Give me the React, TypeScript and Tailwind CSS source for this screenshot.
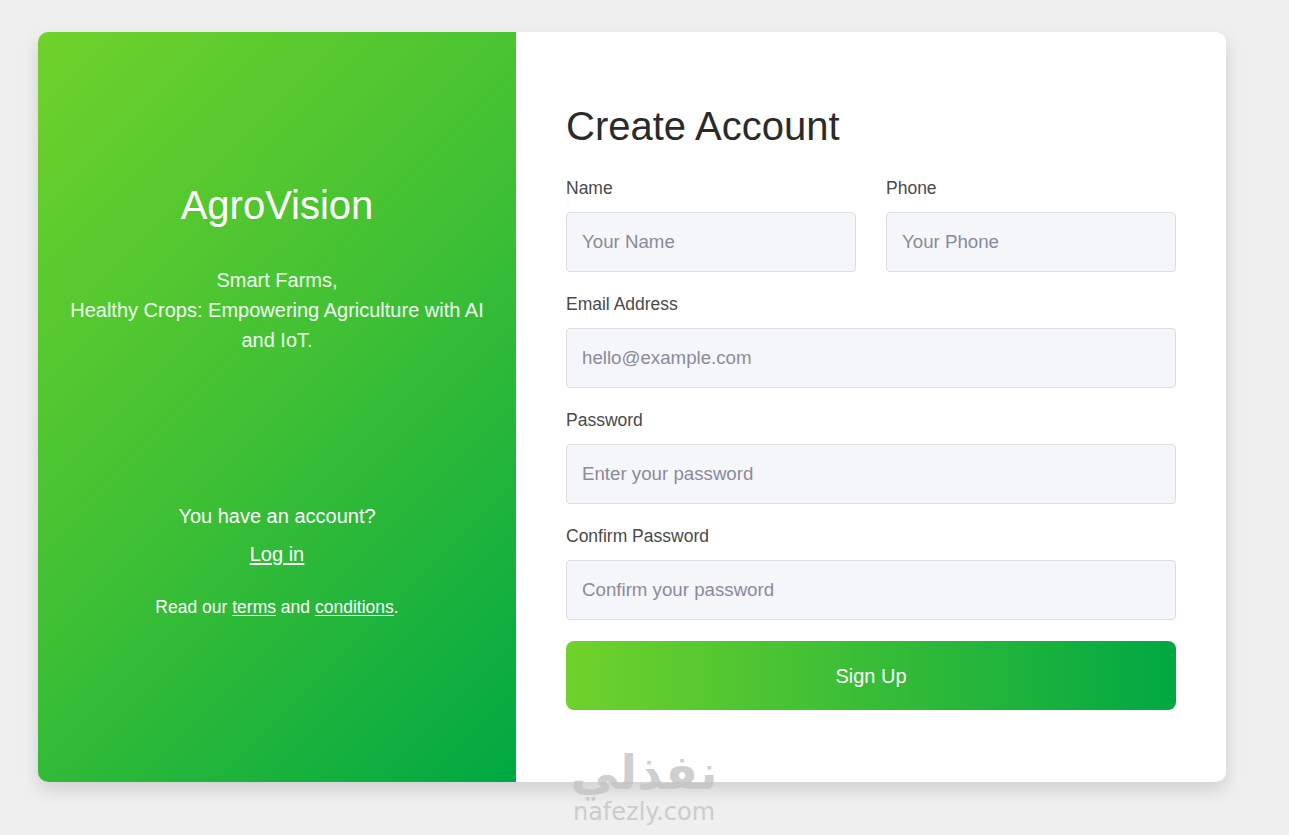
type FieldProps = {
  id: string;
  label: string;
  type?: string;
  placeholder: string;
};

function Field({ id, label, type = 'text', placeholder }: FieldProps) {
  return (
    <div className="mb-5">
      <label htmlFor={id} className="block text-[17.5px] leading-6 mb-3 text-[#4a4a4a]">
        {label}
      </label>
      <input
        id={id}
        type={type}
        placeholder={placeholder}
        className="w-full h-[60px] px-[15px] rounded-[4px] border border-[#dcdde2] bg-[#f5f6fa] text-[18.7px] text-[#333] placeholder:text-[#8b8a99] outline-none"
      />
    </div>
  );
}

export default function App() {
  return (
    <div
      className="relative min-h-[835px] bg-[#efefef] pt-[32px] pl-[38px]"
      style={{ fontFamily: '"Liberation Sans", Arial, sans-serif' }}
    >
      <div className="flex w-[1188px] h-[750px] rounded-[10px] overflow-hidden bg-white shadow-[0_8px_18px_rgba(0,0,0,0.13)]">
        {/* left panel */}
        <div className="w-[478px] shrink-0 flex flex-col items-center text-center text-white pt-[149px] px-6 bg-[linear-gradient(135deg,#70d22a_0%,#3fc034_50%,#00a843_100%)]">
          <h2 className="text-[40px] leading-[48px]">AgroVision</h2>
          <p className="mt-[36px] text-[20px] leading-[30px] text-[#f0fff0]">
            Smart Farms,
            <br />
            Healthy Crops: Empowering Agriculture with AI and IoT.
          </p>
          <p className="mt-[146px] text-[20px] leading-[30px]">You have an account?</p>
          <a href="#" className="mt-2 text-[20px] leading-[30px] underline underline-offset-2">
            Log in
          </a>
          <p className="mt-[25px] text-[17.5px] leading-[26px]">
            Read our{' '}
            <a href="#" className="underline underline-offset-2">
              terms
            </a>{' '}
            and{' '}
            <a href="#" className="underline underline-offset-2">
              conditions
            </a>
            .
          </p>
        </div>

        {/* right panel */}
        <div className="flex-1 pt-[70px] px-[50px]">
          <h1 className="text-[40px] leading-[48px] text-[#2b2b2b] mb-[26px]">Create Account</h1>
          <form onSubmit={(e) => e.preventDefault()}>
            <div className="grid grid-cols-2 gap-x-[30px]">
              <Field id="name" label="Name" placeholder="Your Name" />
              <Field id="phone" label="Phone" placeholder="Your Phone" />
            </div>
            <Field id="email" label="Email Address" type="email" placeholder="hello@example.com" />
            <Field id="password" label="Password" type="password" placeholder="Enter your password" />
            <Field id="confirm" label="Confirm Password" type="password" placeholder="Confirm your password" />
            <button
              type="submit"
              className="w-full h-[69px] mt-[1px] rounded-[8px] text-white text-[20px] bg-[linear-gradient(90deg,#70d22a_0%,#00a843_100%)]"
            >
              Sign Up
            </button>
          </form>
        </div>
      </div>

      {/* watermark */}
      <div className="absolute left-[566px] top-[744px] w-[156px] flex flex-col items-center pointer-events-none select-none text-[#c4c4c4] opacity-80">
        <span className="text-[48px] leading-[56px] font-bold" style={{ fontFamily: '"DejaVu Sans", sans-serif' }} dir="rtl">
          نفذلي
        </span>
        <span className="text-[24px] leading-[28px] -mt-[2px]" style={{ fontFamily: '"DejaVu Sans", sans-serif' }}>
          nafezly.com
        </span>
      </div>
    </div>
  );
}
